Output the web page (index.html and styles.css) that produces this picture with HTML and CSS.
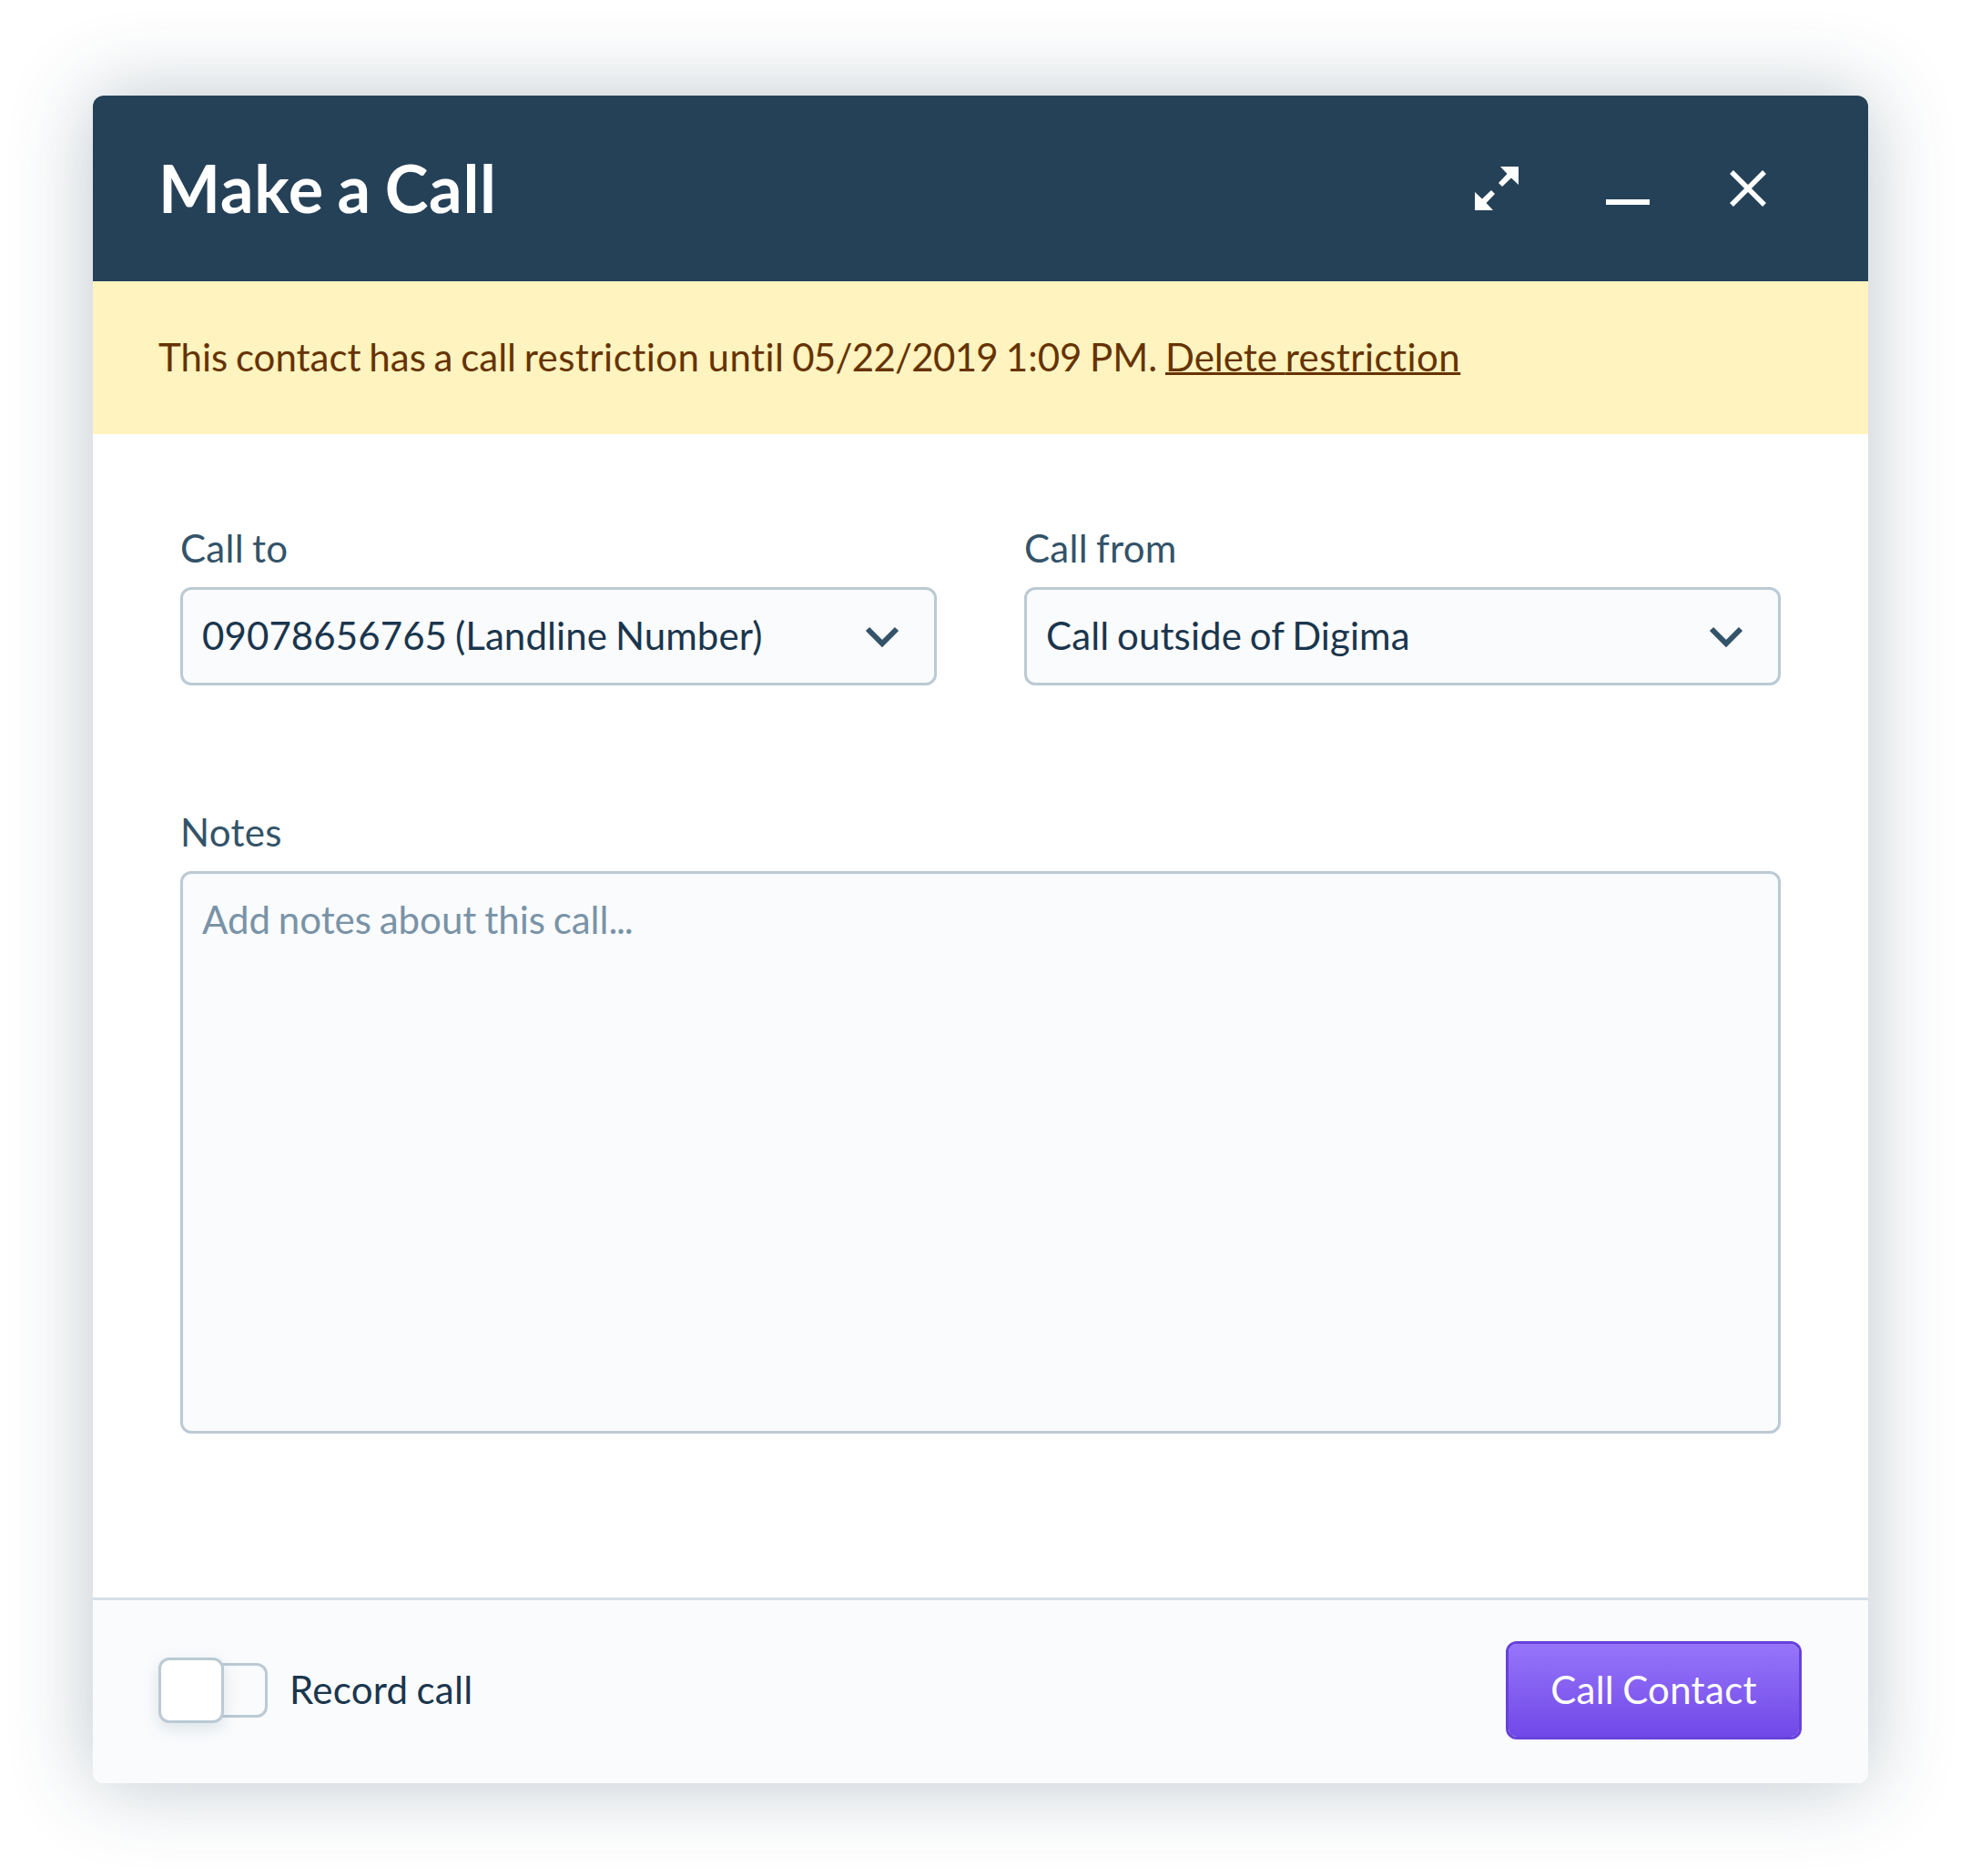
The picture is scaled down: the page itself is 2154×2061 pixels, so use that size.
FILE: index.html
```html
<!DOCTYPE html>
<html lang="en">
<head>
<meta charset="utf-8">
<title>Make a Call</title>
<link rel="stylesheet" href="styles.css">
</head>
<body>
<main class="dialog">
  <header class="dialog-header">
    <h1 class="dialog-title">Make a Call</h1>
    <div class="window-actions">
      <svg class="icon-expand" viewBox="0 0 48 48"><path d="M28 0H48V20L40 12.5L30 22L26 18L35.5 8ZM0 28L8 35.5L18 26L22 30L12.500 40L20 48H0Z"/></svg>
      <svg class="icon-minimize" viewBox="0 0 48 48"><path d="M0 36H48V42H0Z"/></svg>
      <svg class="icon-close" viewBox="0 0 40 40"><path d="M2 2L38 38M38 2L2 38"/></svg>
    </div>
  </header>
  <div class="notice"><p class="notice-text">This contact has a call <span class="wide">restriction until</span> <span class="date">05/22/2019</span> 1:09 PM. <a class="notice-link" href="#">Delete <span class="wide">restriction</span></a></p></div>
  <section class="dialog-body">
    <div class="field-row">
      <div class="field">
        <span class="label">Call to</span>
        <div class="select"><span class="value">09078656765 (Landline Number)</span><svg class="chevron" viewBox="0 0 36 22"><path d="M2 2L18 18L34 2"/></svg></div>
      </div>
      <div class="field">
        <span class="label">Call from</span>
        <div class="select"><span class="value">Call outside of Digima</span><svg class="chevron" viewBox="0 0 36 22"><path d="M2 2L18 18L34 2"/></svg></div>
      </div>
    </div>
    <div class="field">
      <span class="label">Notes</span>
      <div class="notes">Add notes about this call<span class="dots">...</span></div>
    </div>
  </section>
  <footer class="dialog-footer">
    <div class="record">
      <span class="toggle"><span class="knob"></span><span class="track"></span></span>
      <span class="record-label">Record call</span>
    </div>
    <button class="call-button">Call Contact</button>
  </footer>
</main>
</body>
</html>
```
FILE: styles.css
```css
* { box-sizing: border-box; }

body {
  margin: 0;
  padding: 105px 102px 102px;
  background: #fff;
  color: #1a364d;
  font: 42px/60px Lato, sans-serif;
  font-variant-ligatures: none;
  word-spacing: -2px;
}

.dialog {
  display: flex;
  flex-direction: column;
  height: 1854px;
  border-radius: 12px;
  background: #fff;
  box-shadow: 0 0 90px rgba(37, 65, 88, 0.3);
}

.dialog-header {
  display: flex;
  align-items: center;
  justify-content: space-between;
  height: 204px;
  padding: 0 112px 0 72px;
  border-radius: 12px 12px 0 0;
  background: #254158;
  color: #fff;
}

.dialog-title {
  margin: 0 0 2px;
  font-size: 72px;
  line-height: 90px;
  font-weight: 700;
  letter-spacing: 0.8px;
  word-spacing: -3.6px;
}

.window-actions { display: flex; align-items: center; }
.icon-expand, .icon-minimize { width: 48px; height: 48px; fill: #fff; }
.icon-minimize { margin: 0 88px 0 96px; }
.icon-close { width: 40px; height: 40px; fill: none; stroke: #fff; stroke-width: 5.5; }

.notice {
  display: flex;
  align-items: center;
  height: 168px;
  padding: 0 72px;
  background: #fff3bf;
  color: #630;
}

.notice-text { margin: 0 0 2px; }
.wide { letter-spacing: 0.45px; }
.date { letter-spacing: -0.7px; }

.notice-link {
  color: inherit;
  text-decoration-thickness: 3px;
  text-decoration-skip-ink: none;
  text-underline-offset: 1px;
}

.dialog-body {
  display: flex;
  flex: 1;
  flex-direction: column;
  gap: 131px;
  padding: 95px 96px 0;
}

.field-row {
  display: grid;
  grid-template-columns: 1fr 1fr;
  gap: 96px;
}

.field { display: flex; flex-direction: column; gap: 13px; }
.label { color: #335369; letter-spacing: 0.3px; }

.select, .notes {
  border: 3px solid #bbcad4;
  border-radius: 12px;
  background: #fafbfd;
}

.select {
  display: flex;
  align-items: center;
  justify-content: space-between;
  height: 108px;
  padding: 0 39px 0 21px;
}

.value { margin-bottom: 2px; letter-spacing: 0.1px; }

.chevron {
  width: 36px;
  height: 22px;
  margin-top: 2px;
  overflow: visible;
  fill: none;
  stroke: #335369;
  stroke-width: 6;
}

.notes {
  height: 618px;
  padding: 20px 21px;
  color: #7993a7;
}

.dots { letter-spacing: -1.3px; }

.dialog-footer {
  display: flex;
  align-items: center;
  justify-content: space-between;
  height: 204px;
  padding: 0 73px 3px 72px;
  border-top: 3px solid #d5e0e6;
  border-radius: 0 0 12px 12px;
  background: #fafbfd;
}

.record { display: flex; align-items: center; gap: 24px; }
.record-label { margin-bottom: 2px; letter-spacing: 0.3px; }
.toggle { display: flex; align-items: center; }

.knob {
  z-index: 1;
  width: 72px;
  height: 72px;
  border: 3px solid #bbcad4;
  border-radius: 12px;
  background: #fff;
  box-shadow: 0 6px 18px rgba(37, 83, 105, 0.14);
}

.track {
  width: 60px;
  height: 60px;
  margin-left: -12px;
  border: 3px solid #bbcad4;
  border-left: 0;
  border-radius: 0 12px 12px 0;
}

.call-button {
  width: 325px;
  height: 108px;
  padding: 0 0 2px;
  border: 3px solid #6741d9;
  border-radius: 12px;
  background: linear-gradient(#9775fa, #7048e8) padding-box;
  color: #fff;
  font: inherit;
  letter-spacing: 0.3px;
  word-spacing: -2px;
}
```
